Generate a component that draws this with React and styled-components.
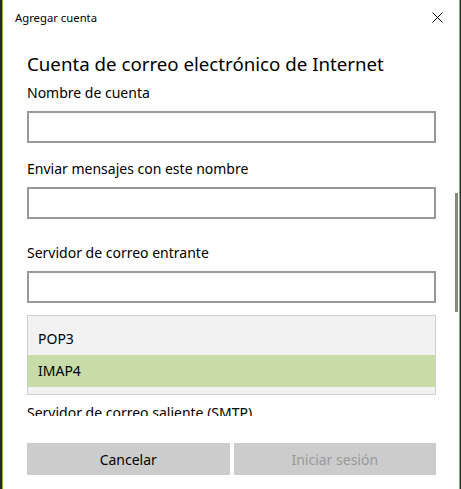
import React from "react";
import styled, { createGlobalStyle } from "styled-components";

const Global = createGlobalStyle`
  html, body { margin: 0; padding: 0; background: #262a26; }
  body { font-family: "Noto Sans", "Open Sans", sans-serif; color: #000; }
  * { box-sizing: border-box; }
`;

const Desktop = styled.div`
  width: 461px;
  height: 489px;
  padding-left: 2px;
  display: flex;
  overflow: hidden;
`;

const Window = styled.div`
  position: relative;
  width: 458px;
  height: 489px;
  background: #fff;
  border-left: 1px solid #84b53e;
  border-right: 1px solid #84b53e;
  display: flex;
  flex-direction: column;
`;

const TitleBar = styled.div`
  height: 34px;
  flex: none;
  display: flex;
  align-items: center;
  justify-content: space-between;
  padding: 0 16px 0 12px;
`;

const TitleText = styled.span`
  font-size: 11.3px;
  color: #000;
`;

const CloseBtn = styled.div`
  width: 11px;
  height: 11px;
  display: flex;
`;

const Scroller = styled.div`
  height: 382px;
  flex: none;
  overflow: hidden;
  padding: 16px 23px 0 24px;
`;

const Heading = styled.h1`
  margin: 0;
  font-weight: 400;
  font-size: 18.7px;
  line-height: 28px;
  white-space: nowrap;
`;

const Label = styled.div`
  font-size: 14px;
  line-height: 20px;
  margin-top: ${(p) => p.$top}px;
  white-space: nowrap;
`;

const Input = styled.div`
  height: 32px;
  margin-top: 8px;
  border: 2px solid #999;
  background: #fff;
`;

const ListBox = styled.div`
  margin-top: 12px;
  height: 80px;
  border: 1px solid #cfcfcf;
  background: #f2f2f2;
  padding: 7px 0;
`;

const Option = styled.div`
  height: 32px;
  line-height: 32px;
  padding-left: 10px;
  font-size: 14px;
  background: ${(p) => (p.$selected ? "#c7dca8" : "transparent")};
`;

const Footer = styled.div`
  flex: none;
  display: grid;
  grid-template-columns: 1fr 1fr;
  gap: 4px;
  padding: 27px 23px 0 24px;
`;

const Button = styled.div`
  height: 32px;
  background: #ccc;
  display: flex;
  align-items: center;
  justify-content: center;
  font-size: 14px;
  color: ${(p) => (p.$disabled ? "#999" : "#000")};
`;

const ScrollThumb = styled.div`
  position: absolute;
  left: 452px;
  top: 193px;
  width: 3px;
  height: 119px;
  background: #868686;
`;

export default function App() {
  return (
    <>
      <Global />
      <Desktop>
        <Window>
          <TitleBar>
            <TitleText>Agregar cuenta</TitleText>
            <CloseBtn>
              <svg width="11" height="11" viewBox="0 0 11 11">
                <path d="M0.5 0.5 L10.5 10.5 M10.5 0.5 L0.5 10.5" stroke="#000" strokeWidth="1" fill="none" />
              </svg>
            </CloseBtn>
          </TitleBar>
          <Scroller>
            <Heading>Cuenta de correo electrónico de Internet</Heading>
            <Label $top={5}>Nombre de cuenta</Label>
            <Input />
            <Label $top={16}>Enviar mensajes con este nombre</Label>
            <Input />
            <Label $top={24}>Servidor de correo entrante</Label>
            <Input />
            <ListBox>
              <Option>POP3</Option>
              <Option $selected>IMAP4</Option>
            </ListBox>
            <Label $top={8}>Servidor de correo saliente (SMTP)</Label>
          </Scroller>
          <Footer>
            <Button>Cancelar</Button>
            <Button $disabled>Iniciar sesión</Button>
          </Footer>
          <ScrollThumb />
        </Window>
      </Desktop>
    </>
  );
}
